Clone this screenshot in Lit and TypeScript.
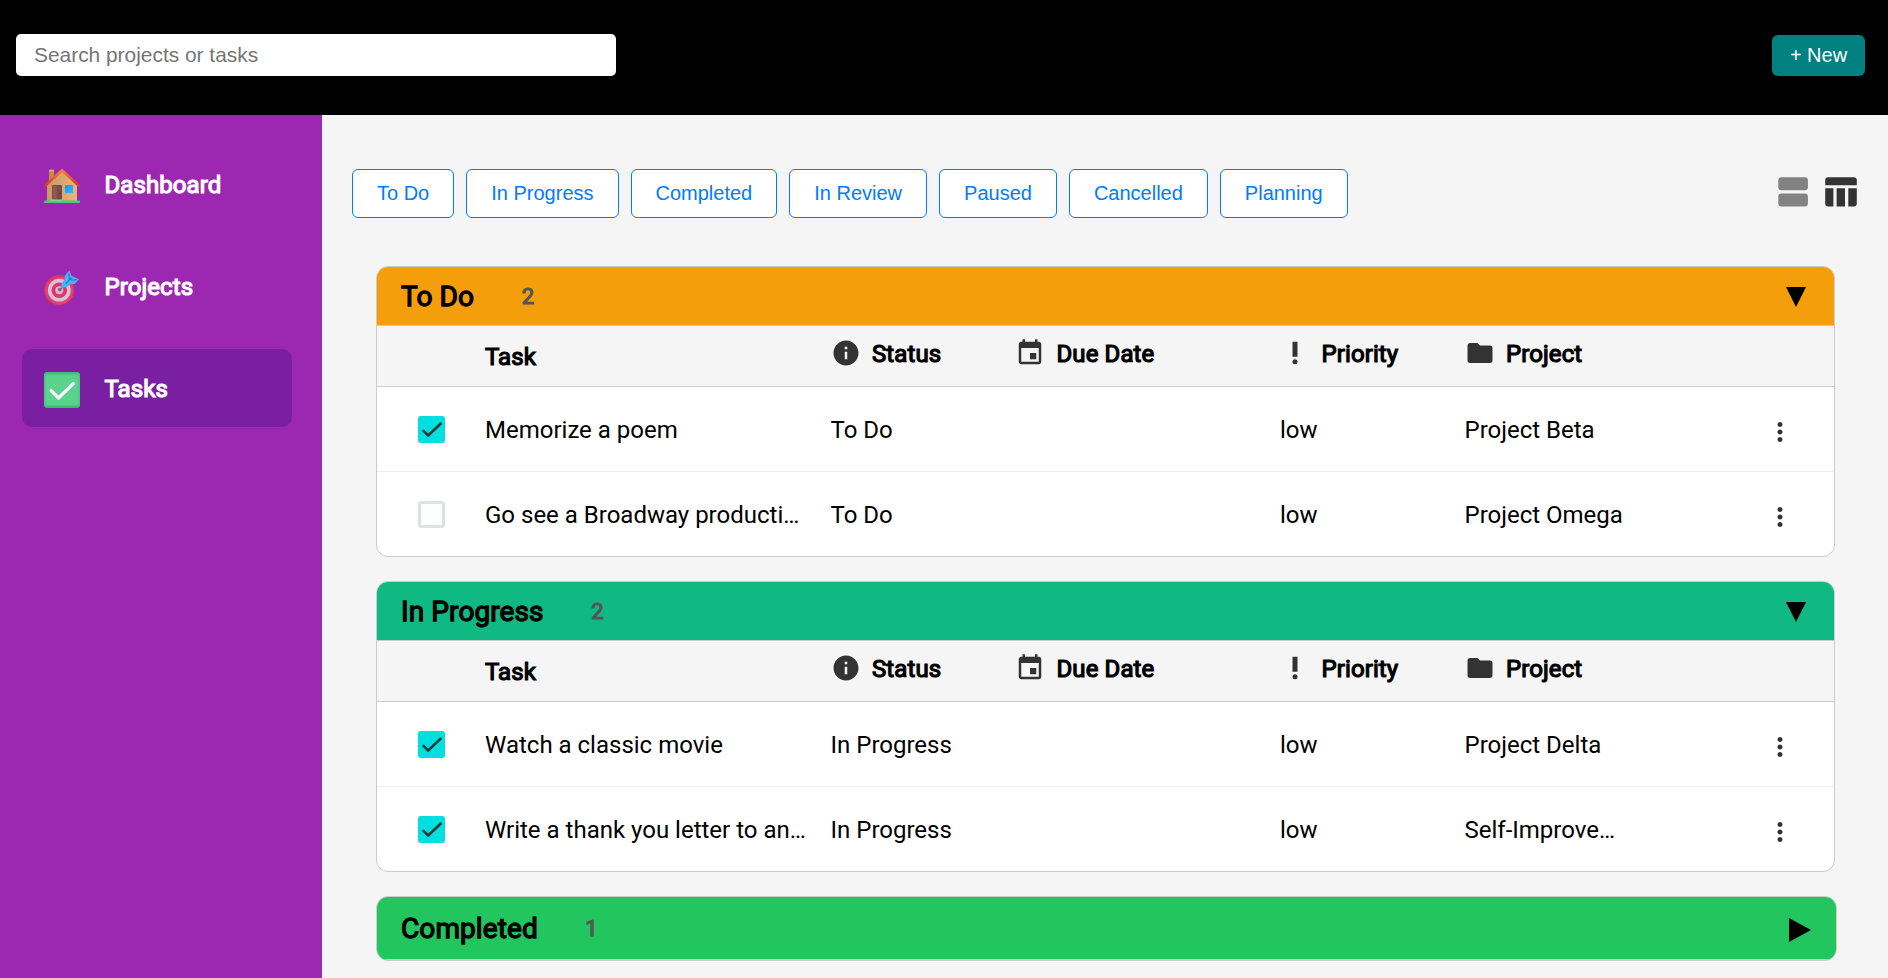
import { LitElement, html, css, svg } from "lit";
import { customElement, property } from "lit/decorators.js";

interface Task {
  name: string;
  status: string;
  project: string;
  done: boolean;
}

interface Group {
  title: string;
  tone: string;
  count: number;
  open: boolean;
  tasks: Task[];
}

const GROUPS: Group[] = [
  {
    title: "To Do", tone: "amber", count: 2, open: true,
    tasks: [
      { name: "Memorize a poem", status: "To Do", project: "Project Beta", done: true },
      { name: "Go see a Broadway producti…", status: "To Do", project: "Project Omega", done: false },
    ],
  },
  {
    title: "In Progress", tone: "emerald", count: 2, open: true,
    tasks: [
      { name: "Watch a classic movie", status: "In Progress", project: "Project Delta", done: true },
      { name: "Write a thank you letter to an…", status: "In Progress", project: "Self-Improve…", done: true },
    ],
  },
  { title: "Completed", tone: "green", count: 1, open: false, tasks: [] },
];

const FILTERS = ["To Do", "In Progress", "Completed", "In Review", "Paused", "Cancelled", "Planning"];

const icons = {
  info: svg`<path d="M12 2C6.48 2 2 6.48 2 12s4.48 10 10 10 10-4.48 10-10S17.52 2 12 2zm1 15h-2v-6h2v6zm0-8h-2V7h2v2z"/>`,
  event: svg`<path d="M17 12h-5v5h5v-5zM16 1v2H8V1H6v2H5c-1.11 0-1.99.9-1.99 2L3 19c0 1.1.89 2 2 2h14c1.1 0 2-.9 2-2V5c0-1.1-.9-2-2-2h-1V1h-2zm3 18H5V8h14v11z"/>`,
  priority: svg`<circle cx="12" cy="19" r="2"/><path d="M10 3h4v12h-4z"/>`,
  folder: svg`<path d="M10 4H4c-1.1 0-1.99.9-1.99 2L2 18c0 1.1.9 2 2 2h16c1.1 0 2-.9 2-2V8c0-1.1-.9-2-2-2h-8l-2-2z"/>`,
  more: svg`<path d="M12 8c1.1 0 2-.9 2-2s-.9-2-2-2-2 .9-2 2 .9 2 2 2zm0 2c-1.1 0-2 .9-2 2s.9 2 2 2 2-.9 2-2-.9-2-2-2zm0 6c-1.1 0-2 .9-2 2s.9 2 2 2 2-.9 2-2-.9-2-2-2z"/>`,
};

const icon = (shape: unknown) =>
  html`<svg class="icon" viewBox="0 0 24 24" width="30" height="30">${shape}</svg>`;

const house = html`<svg viewBox="0 0 36 36" width="36" height="36">
  <defs>
    <linearGradient id="wall" x1="0" x2="1" y1="0" y2="0"><stop offset="0" stop-color="#c99765"/><stop offset="1" stop-color="#e8b47f"/></linearGradient>
    <linearGradient id="pane" x1="0" x2="1" y1="0" y2="1"><stop offset="0" stop-color="#1e90e6"/><stop offset="1" stop-color="#3dbcf8"/></linearGradient>
    <linearGradient id="roof" x1="0" x2="0" y1="0" y2="1"><stop offset="0" stop-color="#fb7a3c"/><stop offset="1" stop-color="#d63a22"/></linearGradient>
  </defs>
  <path fill="#bd8a4d" d="M5 2.2h5v12H5z"/>
  <path fill="#dba75c" d="M5 1.6h5v2H5z"/>
  <path fill="url(#wall)" d="M3 16.5 18 3l15 13.5V34H3z"/>
  <path fill="none" stroke="url(#roof)" stroke-width="2.6" stroke-linecap="round" stroke-linejoin="round" d="M1.6 17.2 18 2.2l16.4 15"/>
  <rect x="8" y="17" width="10" height="15.6" rx="1" fill="#7d4b43"/>
  <rect x="8.8" y="18" width="4" height="14.4" fill="#8d5a50"/>
  <circle cx="15.8" cy="25.2" r=".8" fill="#54302b"/>
  <rect x="7" y="31.6" width="12" height="1.4" fill="#d9c7c9"/>
  <rect x="21" y="17" width="8" height="8" rx=".6" fill="url(#pane)"/>
  <rect x="0" y="32.6" width="36" height="2.4" rx="1" fill="#3fd07f"/>
</svg>`;

const target = html`<svg viewBox="0 0 36 36" width="36" height="36">
  <circle cx="15.2" cy="20.2" r="15" fill="#d63a66"/>
  <circle cx="15.4" cy="20.6" r="13.4" fill="#e2446f"/>
  <circle cx="15.3" cy="20.2" r="11.4" fill="#d3c3dd"/>
  <circle cx="15.3" cy="20.2" r="7.8" fill="#e23466"/>
  <circle cx="15.3" cy="20.2" r="4" fill="#cdb9d3"/>
  <circle cx="15.8" cy="19.6" r="1.8" fill="#8c5b86"/>
  <path stroke="#70668d" stroke-width="1.2" d="m15.6 19.8 6-5.6"/>
  <path fill="#4fb1f0" d="M17.200 17.600c-.4-3.400 1-5.800 3.400-7.800L21 5.400 25.400.6l2 5.200 7.600 3.400-4.400 4.800-5 .4c-2.200 2.600-5 3.600-8.400 3.200z"/>
  <path fill="none" stroke="#1b7bd0" stroke-width="1.100" d="m21.800 13.600 5.600-6M25 3.400v4.400l2.600 2.400 5-.6"/>
</svg>`;

const tick = html`<svg viewBox="0 0 36 36" width="36" height="36">
  <defs>
    <linearGradient id="tile" x1="0" x2="0" y1="0" y2="1"><stop offset="0" stop-color="#47b877"/><stop offset=".12" stop-color="#5ad28e"/><stop offset=".9" stop-color="#57d48b"/><stop offset="1" stop-color="#35a869"/></linearGradient>
  </defs>
  <rect x="0" y="0" width="36" height="36" rx="3.200" fill="url(#tile)"/>
  <rect x=".9" y=".9" width="34.200" height="34.200" rx="2.800" fill="none" stroke="#44bb79" stroke-width="1.600" opacity=".55"/>
  <path fill="none" stroke="#fbf4ff" stroke-width="3.400" stroke-linecap="round" stroke-linejoin="round" d="m7.200 18.600 7.300 7.400L29.200 11.600"/>
</svg>`;

@customElement("top-bar")
export class TopBar extends LitElement {
  static styles = css`
    :host { display: block; }
    .bar {
      display: flex; justify-content: space-between; align-items: flex-start;
      box-sizing: border-box; height: 115px; padding: 34px 23px 0 16px; background: #000;
    }
    .search {
      box-sizing: border-box; width: 600px; height: 42px; padding: 0 18px; border: 0; border-radius: 5px;
      background: #fff; font: 20.9px "Liberation Sans", Arial, sans-serif;
    }
    .search::placeholder { color: #757575; }
    .new {
      width: 93px; height: 41px; margin-top: 1px; padding: 0; border: 0; border-radius: 6px;
      background: #008080; color: #fff; font: 20px "Liberation Sans", Arial, sans-serif;
    }
  `;
  render() {
    return html`<header class="bar">
      <input class="search" type="text" placeholder="Search projects or tasks" />
      <button class="new">+ New</button>
    </header>`;
  }
}

@customElement("side-nav")
export class SideNav extends LitElement {
  static styles = css`
    :host { display: block; flex: none; width: 322px; background: #9c27b0; }
    .nav { display: flex; flex-direction: column; gap: 24px; padding: 30px 30px 0 22px; }
    .item {
      display: flex; align-items: center; gap: 24.500px; box-sizing: border-box; height: 78px;
      padding: 0 22px; border-radius: 10px; color: #fff;
      font: 24px/28px Roboto, sans-serif; letter-spacing: 0.08px; -webkit-text-stroke: 1.2px #fff;
    }
    .item.active { background: #7b1fa2; }
    .glyph { display: block; width: 36px; height: 36px; padding-top: 4px; -webkit-text-stroke: 0; }
    .glyph svg { display: block; }
    .label { padding-top: 2px; }
  `;
  render() {
    const items = [["Dashboard", house], ["Projects", target], ["Tasks", tick]] as const;
    return html`<nav class="nav">
      ${items.map(([label, pic]) => html`<div class="item ${label === "Tasks" ? "active" : ""}">
        <span class="glyph">${pic}</span><span class="label">${label}</span>
      </div>`)}
    </nav>`;
  }
}

@customElement("task-group")
export class TaskGroup extends LitElement {
  @property({ attribute: false }) group!: Group;

  static styles = css`
    :host { display: block; font-family: Roboto, sans-serif; color: #000; }
    .card { box-sizing: border-box; width: 1459px; border: 1px solid #ccc; border-radius: 12px; overflow: hidden; background: #fff; }
    .head {
      display: flex; align-items: center; box-sizing: border-box; height: 59px; padding: 0 28px 0 24px;
      border-bottom: 1px solid #ccc;
    }
    .amber { background: #f59e0b; }
    .emerald { background: #10b981; }
    .green { background: #22c55e; }
    .closed { width: 1461px; }
    .closed .head { height: 63px; padding-right: 25px; }
    .title { padding-top: 2px; font-size: 28px; line-height: 34px; letter-spacing: 0.1px; -webkit-text-stroke: 1.3px #000; }
    .count { margin-left: 47.500px; padding-top: 2px; font-size: 22px; line-height: 26px; color: #555; -webkit-text-stroke: 1.2px #555; }
    .arrow { margin-left: auto; margin-top: 1px; fill: #000; }
    .closed .arrow { margin-top: 4px; }
    .row {
      display: grid; grid-template-columns: 108px 345.500px 184.500px 265px 184.500px 1fr; align-items: center;
      box-sizing: border-box; height: 85px; border-bottom: 1px solid #eee; font-size: 24px; line-height: 28px;
    }
    .row:last-child { height: 84px; border-bottom: 0; }
    .labels { height: 61px; background: #f5f5f5; border-bottom: 1px solid #ccc; letter-spacing: 0.1px; -webkit-text-stroke: 1.2px #000; }
    .labels .name { padding-top: 2px; }
    .field { display: flex; align-items: center; gap: 11.500px; height: 30px; margin-bottom: 6px; }
    .field span { padding-top: 2px; }
    .icon { display: block; flex: none; fill: #333; stroke: none; -webkit-text-stroke: 0; }
    .text { padding-top: 2px; white-space: nowrap; }
    .last { display: flex; justify-content: space-between; align-items: center; padding-right: 39px; }
    .last .icon { margin-top: 6px; }
    .box { box-sizing: border-box; width: 27px; height: 27px; margin-left: 41px; border: 3px solid #dae5e3; border-radius: 3px; }
    .box.on { border: 0; background: #00dfdf; }
    .box svg { display: block; }
  `;

  private head() {
    const g = this.group;
    return html`<div class="head ${g.tone}">
      <span class="title">${g.title}</span><span class="count">${g.count}</span>
      ${g.open
        ? html`<svg class="arrow" width="20" height="20" viewBox="0 0 20 20"><path d="M0 0h20L10 20z"/></svg>`
        : html`<svg class="arrow" width="22" height="24" viewBox="0 0 22 24"><path d="M0 0v24l22-12z"/></svg>`}
    </div>`;
  }

  private row(t: Task) {
    return html`<div class="row">
      <div class="box ${t.done ? "on" : ""}">
        ${t.done ? html`<svg width="27" height="27" viewBox="0 0 27 27"><path d="m4.800 14.200 5.400 5.200L23.300 7" fill="none" stroke="#143838" stroke-width="2.500"/></svg>` : ""}
      </div>
      <span class="text">${t.name}</span>
      <span class="text">${t.status}</span>
      <span></span>
      <span class="text">low</span>
      <div class="last"><span class="text">${t.project}</span>${icon(icons.more)}</div>
    </div>`;
  }

  render() {
    const g = this.group;
    if (!g.open) return html`<section class="card closed">${this.head()}</section>`;
    return html`<section class="card">
      ${this.head()}
      <div class="row labels">
        <span></span>
        <span class="name">Task</span>
        <div class="field">${icon(icons.info)}<span>Status</span></div>
        <div class="field">${icon(icons.event)}<span>Due Date</span></div>
        <div class="field">${icon(icons.priority)}<span>Priority</span></div>
        <div class="field">${icon(icons.folder)}<span>Project</span></div>
      </div>
      ${g.tasks.map((t) => this.row(t))}
    </section>`;
  }
}

@customElement("app-root")
export class AppRoot extends LitElement {
  static styles = css`
    :host { display: flex; flex-direction: column; height: 100vh; overflow: hidden; background: #f5f5f5; }
    .body { display: flex; flex: 1; min-height: 0; }
    .main { flex: 1; min-width: 0; padding: 54px 0 0 30px; overflow: hidden; }
    .tools { display: flex; justify-content: space-between; align-items: center; padding-right: 31px; }
    .filters { display: flex; gap: 12px; }
    .filter {
      height: 49px; padding: 0 24px; border: 1px solid #007bff; border-radius: 6px;
      background: #fff; color: #007bff; font: 20px "Liberation Sans", Arial, sans-serif;
    }
    .views { display: flex; gap: 17px; padding-bottom: 3px; }
    .views svg { display: block; }
    .list { display: flex; flex-direction: column; gap: 24px; padding: 48px 0 0 24px; }
  `;
  render() {
    return html`
      <top-bar></top-bar>
      <div class="body">
        <side-nav></side-nav>
        <main class="main">
          <div class="tools">
            <div class="filters">${FILTERS.map((f) => html`<button class="filter">${f}</button>`)}</div>
            <div class="views">
              <svg width="30" height="30" viewBox="0 0 30 30" fill="#828282"><rect x=".3" y=".2" width="29.600" height="13" rx="3"/><rect x=".3" y="16.400" width="29.600" height="13" rx="3"/></svg>
              <svg width="32" height="30" viewBox="0 0 32 30" fill="#333"><path d="M3.200.2h25.600a3 3 0 0 1 3 3V8.200H.2v-5a3 3 0 0 1 3-3zM.2 11.200h8.200v18.200H3.200a3 3 0 0 1-3-3zM11.600 11.200h8.400v18.200h-8.400zM23.300 11.200h8.500v15.200a3 3 0 0 1-3 3h-5.500z"/></svg>
            </div>
          </div>
          <div class="list">${GROUPS.map((g) => html`<task-group .group=${g}></task-group>`)}</div>
        </main>
      </div>
    `;
  }
}
